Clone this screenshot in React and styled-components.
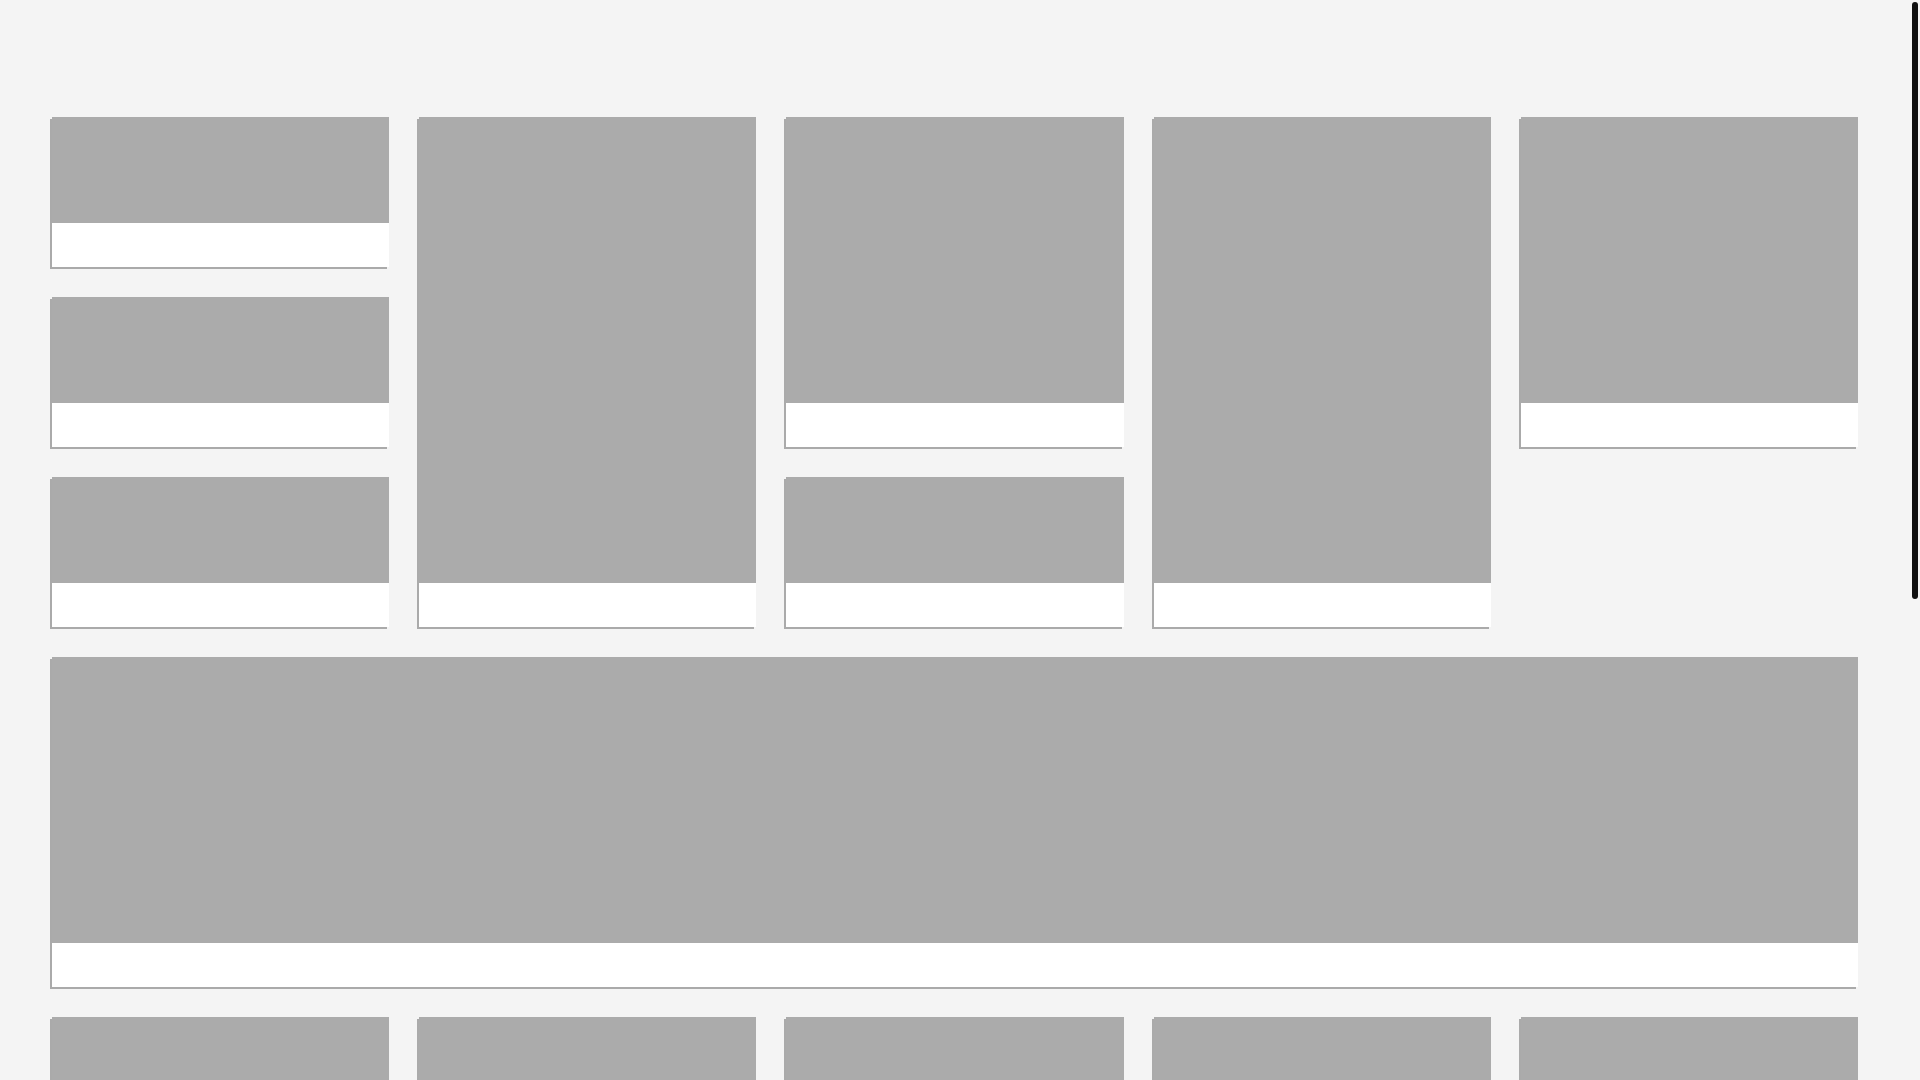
import React from 'react';
import styled, { createGlobalStyle } from 'styled-components';

const GlobalStyle = createGlobalStyle`
  html, body {
    margin: 0;
    padding: 0;
    background: #f4f4f4;
    font-family: "Liberation Sans", Arial, sans-serif;
  }
`;

const Page = styled.main`
  padding: 117px 62px 57px 52px;
`;

const Masonry = styled.div`
  display: grid;
  grid-template-columns: repeat(5, 1fr);
  grid-auto-rows: 150px;
  gap: 30px;
`;

const Card = styled.article`
  grid-column: ${p => p.$col} / span ${p => p.$cols || 1};
  grid-row: ${p => p.$row} / span ${p => p.$rows || 1};
  display: flex;
  flex-direction: column;
  box-shadow: -2px 2px 0 #aaa;
`;

const Thumb = styled.div`
  flex: 1;
  background: #ababab;
`;

const Caption = styled.div`
  height: 44px;
  flex-shrink: 0;
  background: #fff;
`;

// page scrollbar (the browser's own is hidden in the capture)
const ScrollTrack = styled.div`
  position: fixed;
  top: 0;
  right: 0;
  width: 10px;
  height: 100vh;
  background: #f5f5f5;
`;

const ScrollThumb = styled.div`
  margin: 2px 2px 0;
  height: 597px;
  border-radius: 3px;
  background: #111;
`;

const tiles = [
  { col: 1, row: 1 },
  { col: 1, row: 2 },
  { col: 1, row: 3 },
  { col: 2, row: 1, rows: 3 },
  { col: 3, row: 1, rows: 2 },
  { col: 3, row: 3 },
  { col: 4, row: 1, rows: 3 },
  { col: 5, row: 1, rows: 2 },
  { col: 1, row: 4, cols: 5, rows: 2 },
  { col: 1, row: 6, rows: 2 },
  { col: 2, row: 6 },
  { col: 3, row: 6, rows: 3 },
  { col: 4, row: 6, rows: 2 },
  { col: 5, row: 6 },
  { col: 2, row: 7, rows: 2 },
  { col: 5, row: 7, rows: 2 },
  { col: 1, row: 8 },
  { col: 4, row: 8 },
  { col: 1, row: 9, cols: 5, rows: 2 },
];

export default function App() {
  return (
    <>
      <GlobalStyle />
      <Page>
        <Masonry>
          {tiles.map((t, i) => (
            <Card key={i} $col={t.col} $row={t.row} $cols={t.cols} $rows={t.rows}>
              <Thumb />
              <Caption />
            </Card>
          ))}
        </Masonry>
      </Page>
      <ScrollTrack>
        <ScrollThumb />
      </ScrollTrack>
    </>
  );
}
